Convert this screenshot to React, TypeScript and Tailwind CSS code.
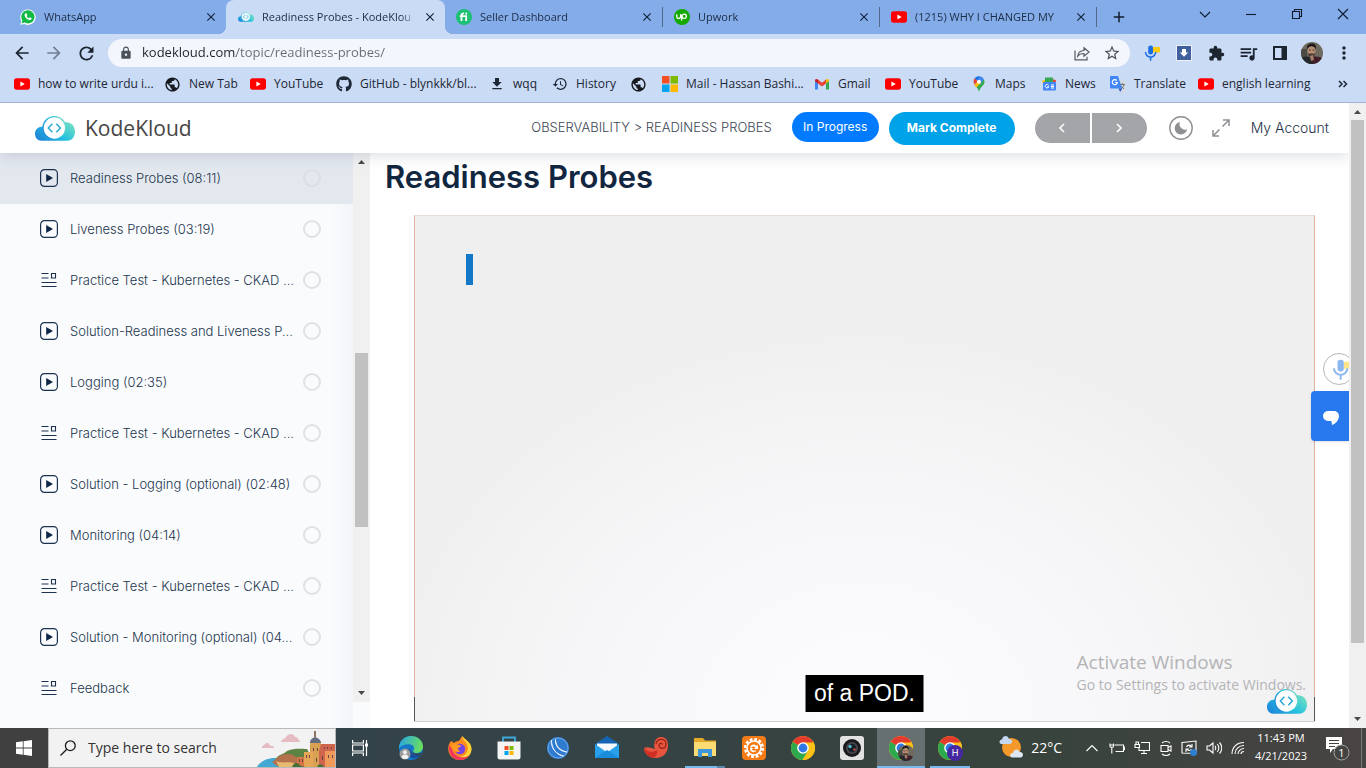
import React, { useId } from 'react';
import { FaGithub } from 'react-icons/fa';
import {
  MdArrowBack,
  MdArrowForward,
  MdClose,
  MdExtension,
  MdFileDownload,
  MdHistory,
  MdLock,
  MdMoreVert,
  MdPublic,
  MdQueueMusic,
  MdRefresh,
  MdStarBorder,
  MdAdd,
} from 'react-icons/md';

const ui = "font-['Open_Sans','Noto_Sans',sans-serif]";

/* ---------- logos ---------- */

function KodeKloudLogo({ className = '', faded = false }: { className?: string; faded?: boolean }) {
  const id = useId();
  return (
    <svg viewBox="0 0 120 75" className={className} aria-hidden="true">
      <defs>
        <linearGradient id={id} x1="0" y1="0.8" x2="1" y2="0.3">
          <stop offset="0" stopColor="#1f85d8" />
          <stop offset="0.55" stopColor="#22c0e0" />
          <stop offset="1" stopColor="#6cdcc4" />
        </linearGradient>
      </defs>
      <path
        d="M19 74C8 74 0 65 0 53s9-21 20-21c3 0 5 0 7 1L90 19c17-2 30 10 30 28 0 17-11 27-24 27Z"
        fill={`url(#${id})`}
      />
      <circle cx="58" cy="36" r="34" fill={faded ? '#e6f5fb' : '#fff'} stroke={`url(#${id})`} strokeWidth="4" />
      <path d="M52 23 40 36l12 13M64 23l12 13-12 13" fill="none" stroke="#2aa9d8" strokeWidth="4.5" />
    </svg>
  );
}

function YouTubeIcon() {
  return (
    <svg viewBox="0 0 16 16" className="size-4 shrink-0" aria-hidden="true">
      <rect x="0" y="2.3" width="16" height="11.4" rx="2.6" fill="#f00" />
      <path d="M6.4 5.5v5l4.3-2.5Z" fill="#fff" />
    </svg>
  );
}

function WhatsAppIcon() {
  return (
    <svg viewBox="0 0 16 16" className="size-4 shrink-0" aria-hidden="true">
      <path d="M.3 15.7 1.3 12A7.7 7.7 0 1 1 4.4 15Z" fill="#fff" />
      <path d="m1.6 14.4.8-2.9A6.6 6.6 0 1 1 4.7 13.6Z" fill="#12b944" />
      <path
        d="M5.8 4.3c-.3 0-1.2.5-1.2 1.7 0 1.9 2.8 5 5.1 5 1.200 0 1.900-.8 1.900-1.600 0-.3-1.500-1.100-1.800-1.100-.3 0-.6.900-.9.900-.5 0-2.200-1.500-2.200-2 0-.3.600-.600.600-.900 0-.3-.600-2-.900-2Z"
        fill="#fff"
      />
    </svg>
  );
}

function FiverrIcon() {
  return (
    <svg viewBox="0 0 16 16" className="size-4 shrink-0" aria-hidden="true">
      <circle cx="8" cy="8" r="8" fill="#1dbf73" />
      <path d="M5.500 12V6.500c0-1.500.8-2.200 2.400-2.200M3.800 7.200h6.400V12" fill="none" stroke="#fff" strokeWidth="1.800" />
      <circle cx="10.200" cy="4.600" r="1.100" fill="#fff" />
    </svg>
  );
}

function UpworkIcon() {
  return (
    <svg viewBox="0 0 16 16" className="size-4 shrink-0" aria-hidden="true">
      <circle cx="8" cy="8" r="8" fill="#14a800" />
      <path
        d="M2.800 5.200v2.300a1.900 1.900 0 0 0 3.800 0V5.200c.8 2.600 1.900 4.200 3.700 4.200a2.100 2.100 0 1 0-2.100-2.500L7.500 11.500"
        fill="none"
        stroke="#fff"
        strokeWidth="1.300"
      />
    </svg>
  );
}

function MicrosoftIcon() {
  return (
    <svg viewBox="0 0 16 16" className="size-4 shrink-0" aria-hidden="true">
      <path fill="#f25022" d="M0 0h7.500v7.500H0z" />
      <path fill="#7fba00" d="M8.500 0H16v7.500H8.500z" />
      <path fill="#00a4ef" d="M0 8.500h7.500V16H0z" />
      <path fill="#ffb900" d="M8.500 8.500H16V16H8.500z" />
    </svg>
  );
}

function GmailIcon() {
  return (
    <svg viewBox="0 0 16 16" className="size-4 shrink-0" aria-hidden="true">
      <path fill="#4285f4" d="M1 13.500h3V7L1 4.500z" />
      <path fill="#34a853" d="M12 13.500h3v-9L12 7z" />
      <path fill="#ea4335" d="M4 3.500 8 6.700l4-3.200V7.400L8 10.500 4 7.400z" />
      <path fill="#c5221f" d="M1 4.500C1 2.700 2.700 2.500 4 3.500v3.900L1 5.200z" />
      <path fill="#fbbc04" d="M15 4.500c0-1.800-1.700-2-3-1v3.900l3-2.200z" />
    </svg>
  );
}

function MapsIcon() {
  return (
    <svg viewBox="0 0 16 16" className="size-4 shrink-0" aria-hidden="true">
      <path fill="#34a853" d="M13.500 5.800c0 4-4.300 4.800-5.500 10C7.300 13 5.500 11 4 9.300l8.800-6c.5.700.7 1.600.7 2.500Z" />
      <path fill="#fbbc04" d="M3.500 8.700 6.800 5l2.900 2.300-4.500 4.100C4.500 10.500 3.900 9.700 3.500 8.700Z" />
      <path fill="#ea4335" d="M3.600 2.300 6.700 5 3.500 8.700C2.300 6.500 2.200 4.200 3.600 2.300Z" />
      <path fill="#1a73e8" d="M3.600 2.300C5 .6 7.600-.1 9.700.6L6.700 5Z" />
      <path fill="#4285f4" d="M9.700.6c1.400.4 2.500 1.400 3.100 2.700L9.700 7.300 6.700 5Z" />
      <circle cx="8" cy="5.800" r="2" fill="#fff" />
    </svg>
  );
}

function NewsIcon() {
  return (
    <svg viewBox="0 0 16 16" className="size-4 shrink-0" aria-hidden="true">
      <path fill="#ea4335" d="m10 3 5 1-1 5H9z" />
      <path fill="#fbbc04" d="m1 5 5-2 3 5-6 2z" />
      <path fill="#34a853" d="M4 1.500h8V8H4z" />
      <rect x="2" y="6" width="13" height="8.500" rx="1" fill="#4285f4" />
      <path d="M7.600 9.200a1.800 1.800 0 1 0 .2 1.500H6.200M10 9h3M10 10.500h3M10 12h3" stroke="#fff" fill="none" />
    </svg>
  );
}

function TranslateIcon() {
  return (
    <svg viewBox="0 0 16 16" className="size-4 shrink-0" aria-hidden="true">
      <path fill="#d5d9e0" d="M7 5h8c.5 0 1 .4 1 1v9c0 .5-.5 1-1 1H10z" />
      <path d="M9.500 8.500H15M12.200 7v1.500M14 8.500c-.3 2-1.500 3.300-3 4.300M10.800 9.500c.6 1.300 1.800 2.500 3.200 3.300" stroke="#6b7680" fill="none" />
      <path fill="#4285f4" d="M1 0h7l4 12.500H1c-.5 0-1-.5-1-1V1c0-.5.500-1 1-1Z" />
      <path fill="#2a56c6" d="m8.500 12.500 1.700 3.500 2-3.500z" />
      <path d="M6.800 4.700A2.500 2.500 0 1 0 7.300 6.500H5" stroke="#fff" strokeWidth="1.200" fill="none" />
    </svg>
  );
}

function MicIcon({ className = '' }: { className?: string }) {
  return (
    <svg viewBox="0 0 16 16" className={className} aria-hidden="true">
      <rect x="9" y="2" width="7" height="5.500" rx="0.800" fill="#fbcb12" />
      <rect x="4.200" y="0.500" width="4.800" height="9" rx="2.200" fill="#1a6fe0" />
      <path d="M1.500 7a5.100 5.100 0 0 0 10.200 0M6.600 12v3.800" fill="none" stroke="#1a6fe0" strokeWidth="1.500" />
    </svg>
  );
}

function Avatar({ className = '' }: { className?: string }) {
  const id = useId();
  return (
    <svg viewBox="0 0 22 22" className={className} aria-hidden="true">
      <clipPath id={id}>
        <circle cx="11" cy="11" r="11" />
      </clipPath>
      <g clipPath={`url(#${id})`}>
        <path fill="#6f6a5e" d="M0 0h22v22H0z" />
        <path fill="#4c4a45" d="M0 7h6v10H0z" />
        <path fill="#401f29" d="M9 16c4-2 9-2 13 1v6H7z" />
        <path fill="#24282c" d="M0 17c3-3 7-3 10-1l2 6H0z" />
        <ellipse cx="10.500" cy="9" rx="4" ry="5.300" fill="#b58c74" />
        <path fill="#1c1817" d="M6 7.500c-.6-4.500 2-6 5-6s4.600 2 3.800 6c-.8-2.500-2-3.300-4.300-3.300S6.800 5.500 6 7.500Z" />
        <path fill="#4a3830" d="M7 11c1 1 2 .5 3.500.5s2.500.5 3.500-.5c0 2.700-1.500 4.200-3.500 4.200S7 13.700 7 11Z" />
        <path d="M8 8h1.800M11.500 8h1.800" stroke="#3a2a24" strokeWidth="0.900" />
        <path fill="#a67d68" d="m9 14 3-1 1 5-3 1z" />
      </g>
    </svg>
  );
}

/* ---------- browser chrome ---------- */

type Tab = { title: string; icon: React.ReactNode; width: string; active?: boolean; line?: boolean };

const tabs: Tab[] = [
  { title: 'WhatsApp', icon: <WhatsAppIcon />, width: 'w-[226px] pl-5' },
  {
    title: 'Readiness Probes - KodeKlou',
    icon: <KodeKloudLogo faded className="w-4 shrink-0" />,
    width: 'w-[219px] pl-3',
    active: true,
  },
  { title: 'Seller Dashboard', icon: <FiverrIcon />, width: 'w-[218px] pl-[11px]', line: true },
  { title: 'Upwork', icon: <UpworkIcon />, width: 'w-[217px] pl-[11px]', line: true },
  { title: '(1215) WHY I CHANGED MY', icon: <YouTubeIcon />, width: 'w-[217px] pl-[11px]', line: true },
];

function TabStrip() {
  return (
    <div className="flex h-[34px] shrink-0 bg-[#84ace9]">
      <div role="tablist" className="flex min-w-0">
        {tabs.map((t) => (
          <div
            key={t.title}
            role="tab"
            aria-selected={!!t.active}
            className={`relative flex items-center ${t.width} ${t.active ? 'rounded-t-lg bg-[#cadbf5]' : ''}`}
          >
            {t.active && (
              <>
                <i className="absolute bottom-0 -left-2 size-2 bg-[radial-gradient(circle_at_0_0,transparent_8px,#cadbf5_8px)]" />
                <i className="absolute -right-2 bottom-0 size-2 bg-[radial-gradient(circle_at_100%_0,transparent_8px,#cadbf5_8px)]" />
              </>
            )}
            {t.icon}
            <span className="ml-2 w-[154px] overflow-hidden mask-r-from-90% text-[11px] whitespace-nowrap text-[#1c2c44]">{t.title}</span>
            <button aria-label={`Close ${t.title}`} className="mr-2 ml-auto grid size-[14px] place-items-center text-[#13233b]">
              <MdClose size={14} />
            </button>
            {t.line && <i className="h-5 w-px bg-[#52688c]" />}
          </div>
        ))}
      </div>
      <button aria-label="New tab" className="ml-[10px] grid w-6 place-items-center text-[#111d30]">
        <MdAdd size={18} />
      </button>
      <div className="ml-auto flex h-7 items-center text-[#101a2c]">
        {[
          ['Search tabs', 'M1 4l5 5 5-5'],
          ['Minimize', 'M1 6.500h10'],
          ['Restore', 'M1.500 3.500h7v7h-7zM3.500 3V1.500h7v7H9'],
          ['Close window', 'M1 1l10 10M11 1 1 11'],
        ].map(([label, d]) => (
          <button key={label} aria-label={label} className="grid w-[46px] place-items-center">
            <svg viewBox="0 0 12 12" className="size-3" fill="none" stroke="currentColor" strokeWidth="1.100">
              <path d={d} />
            </svg>
          </button>
        ))}
      </div>
    </div>
  );
}

function Toolbar() {
  const btn = 'grid h-7 w-8 shrink-0 place-items-center text-[#1c2430]';
  return (
    <div className="flex h-[38px] shrink-0 items-center bg-[#cadbf5] px-[6px]">
      <button aria-label="Back" className={btn}>
        <MdArrowBack size={20} />
      </button>
      <button aria-label="Forward" className={`${btn} opacity-50`}>
        <MdArrowForward size={20} />
      </button>
      <button aria-label="Reload" className={btn}>
        <MdRefresh size={21} />
      </button>
      <div className="mx-[6px] flex h-7 flex-1 items-center rounded-full bg-[#f3f7fd] pr-1 pl-[11px]">
        <MdLock size={14} className="text-[#4b5159]" />
        <input
          aria-label="Address"
          defaultValue="kodekloud.com/topic/readiness-probes/"
          className="ml-[9px] min-w-0 flex-1 bg-linear-to-r from-[#1f2227] from-[94px] to-[#666b73] to-[94px] bg-clip-text text-[13px] text-transparent outline-none"
        />
        <button aria-label="Share" className={btn}>
          <svg viewBox="0 0 16 16" className="size-4" fill="none" stroke="#555a61" strokeWidth="1.200">
            <path d="M1 5.500v9.300h12v-3M3.700 11.200c.4-3.800 2.600-5.500 6.300-5.700V2.800L15 7l-5 4.200V8.500c-2.800 0-4.800.7-6.300 2.700Z" />
          </svg>
        </button>
        <button aria-label="Bookmark" className="grid size-7 place-items-center text-[#4b5159]">
          <MdStarBorder size={18} />
        </button>
      </div>
      <button aria-label="Voice typing" className={btn}>
        <MicIcon className="size-4" />
      </button>
      <button aria-label="Downloader" className={btn}>
        <svg viewBox="0 0 16 16" className="size-4">
          <rect x="0.500" y="0.500" width="15" height="15" fill="#3f5f9d" stroke="#eef3fb" />
          <path d="M6 4h4v3.500h2.200L8 11.800 3.800 7.500H6z" fill="#fff" />
        </svg>
      </button>
      <button aria-label="Extensions" className={btn}>
        <MdExtension size={17} />
      </button>
      <button aria-label="Media" className={btn}>
        <MdQueueMusic size={21} />
      </button>
      <button aria-label="Side panel" className={btn}>
        <svg viewBox="0 0 14 14" className="size-[14px]">
          <path fill="currentColor" fillRule="evenodd" d="M0 0h14v14H0zM2 2v10h6.500V2z" />
        </svg>
      </button>
      <button aria-label="Profile" className={btn}>
        <Avatar className="size-[22px]" />
      </button>
      <button aria-label="Menu" className={btn}>
        <MdMoreVert size={20} />
      </button>
    </div>
  );
}

const globe = <MdPublic size={17} className="shrink-0 text-[#16191e]" />;

const bookmarks: { label: string; icon: React.ReactNode; width: string }[] = [
  { label: 'how to write urdu i...', icon: <YouTubeIcon />, width: 'w-[150px]' },
  { label: 'New Tab', icon: globe, width: 'w-[86px]' },
  { label: 'YouTube', icon: <YouTubeIcon />, width: 'w-[86px]' },
  { label: 'GitHub - blynkkk/bl...', icon: <FaGithub size={16} className="shrink-0" />, width: 'w-[153px]' },
  { label: 'wqq', icon: <MdFileDownload size={16} className="shrink-0" />, width: 'w-[63px]' },
  { label: 'History', icon: <MdHistory size={16} className="shrink-0" />, width: 'w-[78px]' },
  { label: '', icon: globe, width: 'w-[32px]' },
  { label: 'Mail - Hassan Bashi...', icon: <MicrosoftIcon />, width: 'w-[152px]' },
  { label: 'Gmail', icon: <GmailIcon />, width: 'w-[71px]' },
  { label: 'YouTube', icon: <YouTubeIcon />, width: 'w-[86px]' },
  { label: 'Maps', icon: <MapsIcon />, width: 'w-[70px]' },
  { label: 'News', icon: <NewsIcon />, width: 'w-[69px]' },
  { label: 'Translate', icon: <TranslateIcon />, width: 'w-[88px]' },
  { label: 'english learning', icon: <YouTubeIcon />, width: 'w-[120px]' },
];

function BookmarksBar() {
  return (
    <div className="flex h-[31px] shrink-0 items-center border-b border-[#a3b3d4] bg-[#cadbf5] pb-[6px] pl-[14px] text-xs text-[#1d2736]">
      {bookmarks.map((b, i) => (
        <a key={i} href="#" aria-label={b.label || 'Untitled'} className={`flex shrink-0 items-center gap-2 whitespace-nowrap ${b.width}`}>
          {b.icon}
          {b.label}
        </a>
      ))}
      <button aria-label="More bookmarks" className="mr-[18px] ml-auto">
        <svg viewBox="0 0 10 8" className="h-2 w-[10px]" fill="none" stroke="currentColor" strokeWidth="1.500">
          <path d="m1 1 3 3-3 3M5.500 1l3 3-3 3" />
        </svg>
      </button>
    </div>
  );
}

/* ---------- page ---------- */

function Arrow({ down = false }: { down?: boolean }) {
  return (
    <svg viewBox="0 0 17 17" className="size-[17px] shrink-0" aria-hidden="true">
      <path d={down ? 'M5 6h7l-3.500 4z' : 'M5 11h7L8.500 7z'} fill="#4a4a4a" />
    </svg>
  );
}

function PageHeader() {
  return (
    <header className="z-10 flex h-[50px] shrink-0 items-center bg-white pr-5 pl-[35px] shadow-[0_2px_14px_rgba(60,70,110,0.2)]">
      <a href="#" className="flex items-center gap-[10px]">
        <KodeKloudLogo className="w-10" />
        <span className="font-['Open_Sans',sans-serif] text-[21px] leading-[26px] text-[#454545]">KodeKloud</span>
      </a>
      <div className="ml-auto flex items-center">
        <span className="text-[13px] font-light whitespace-nowrap text-[#3c4654]">OBSERVABILITY &gt; READINESS PROBES</span>
        <button className="mb-[2px] ml-5 h-[30px] w-[87px] rounded-full bg-[#007bff] text-xs text-white">In Progress</button>
        <button className="ml-[10px] h-[33px] w-[126px] rounded-full bg-[#00a2e8] text-xs font-bold text-white">Mark Complete</button>
        <div className="ml-5 flex gap-[2px]">
          <button aria-label="Previous lesson" className="grid h-[30px] w-[55px] place-items-center rounded-l-full bg-[#a3a5a8]">
            <svg viewBox="0 0 8 10" className="h-[10px] w-2" fill="none" stroke="#fff" strokeWidth="1.600">
              <path d="M6 1 2 5l4 4" />
            </svg>
          </button>
          <button aria-label="Next lesson" className="grid h-[30px] w-[55px] place-items-center rounded-r-full bg-[#a3a5a8]">
            <svg viewBox="0 0 8 10" className="h-[10px] w-2" fill="none" stroke="#fff" strokeWidth="1.600">
              <path d="m2 1 4 4-4 4" />
            </svg>
          </button>
        </div>
        <button aria-label="Dark mode" className="ml-[22px]">
          <svg viewBox="0 0 24 24" className="size-6">
            <circle cx="12" cy="12" r="11.200" fill="none" stroke="#8d8f92" strokeWidth="1.400" />
            <path d="M11 6a5.500 5.500 0 0 0 7.200 7.200A6.300 6.300 0 1 1 11 6Z" fill="#8d8f92" />
          </svg>
        </button>
        <button aria-label="Full screen" className="ml-[19px]">
          <svg viewBox="0 0 18 18" className="size-[18px]" fill="none" stroke="#8d8f92" strokeWidth="1.500">
            <path d="M11 1h6v6M17 1l-6.500 6.500M7 17H1v-6M1 17l6.500-6.500" />
          </svg>
        </button>
        <a href="#" className="ml-[21px] text-sm font-light whitespace-nowrap text-[#1e3247]">
          My Account
        </a>
      </div>
    </header>
  );
}

const lessons: { title: string; kind: 'video' | 'text' }[] = [
  { title: 'Readiness Probes (08:11)', kind: 'video' },
  { title: 'Liveness Probes (03:19)', kind: 'video' },
  { title: 'Practice Test - Kubernetes - CKAD ...', kind: 'text' },
  { title: 'Solution-Readiness and Liveness P...', kind: 'video' },
  { title: 'Logging (02:35)', kind: 'video' },
  { title: 'Practice Test - Kubernetes - CKAD ...', kind: 'text' },
  { title: 'Solution - Logging (optional) (02:48)', kind: 'video' },
  { title: 'Monitoring (04:14)', kind: 'video' },
  { title: 'Practice Test - Kubernetes - CKAD ...', kind: 'text' },
  { title: 'Solution - Monitoring (optional) (04...', kind: 'video' },
  { title: 'Feedback', kind: 'text' },
];

function LessonIcon({ kind }: { kind: 'video' | 'text' }) {
  return (
    <svg viewBox="0 0 18 18" className="mb-px size-[18px] shrink-0" fill="none" stroke="#1c3350" aria-hidden="true">
      {kind === 'video' ? (
        <>
          <rect x="0.600" y="0.600" width="16.800" height="16.800" rx="3.800" strokeWidth="1.200" />
          <path d="M6.200 5v8l6.800-4z" fill="#0f2747" stroke="none" />
        </>
      ) : (
        <path d="M1.500 2.500h7M1.500 7h7M11.500 2.500h4v4.500h-4zM1.500 11.500h15M1.500 15.500h15" strokeWidth="1.100" />
      )}
    </svg>
  );
}

function Sidebar() {
  return (
    <aside className="flex w-[370px] shrink-0 bg-[#fafbfd]">
      <nav className="min-w-0 flex-1 bg-linear-to-l from-[#f3f5fa] to-[#fafbfd] to-[24px]">
        {lessons.map((l, i) => (
          <a
            key={i}
            href="#"
            aria-current={i === 0 ? 'page' : undefined}
            className={`flex h-[51px] items-center pr-8 pl-10 text-[13px] font-light text-[#22364e] ${i === 0 ? 'bg-[#e3e8ef]' : ''}`}
          >
            <LessonIcon kind={l.kind} />
            <span className="ml-3 min-w-0 flex-1 whitespace-nowrap">{l.title}</span>
            <i className={`mb-px size-[18px] shrink-0 rounded-full border-2 ${i === 0 ? 'border-[#dbdee3]' : 'border-[#e0e1e4]'}`} />
          </a>
        ))}
      </nav>
      <div className="mb-[26px] flex w-[17px] flex-col items-center bg-[#f0f0f0]">
        <Arrow />
        <i className="mt-[183px] h-[174px] w-[13px] bg-[#c1c1c1]" />
        <span className="mt-auto flex">
          <Arrow down />
        </span>
      </div>
    </aside>
  );
}

function Video() {
  return (
    <div className="relative mt-[19px] mr-[34px] ml-11 aspect-video border-x border-t border-b border-x-[#e2b39b] border-t-[#e6dcd8] border-b-[#cfcfd2] bg-[#f0eff0] bg-[radial-gradient(ellipse_55%_80%_at_50%_100%,#fcfcfe_0%,#f8f8fa_45%,#f0eff0_100%)]">
      <i className="absolute top-[38px] left-[51px] h-[31px] w-[7px] bg-[#1478c8]" />
      <i className="absolute bottom-0 -left-px h-6 w-px bg-[#55565c]" />
      <i className="absolute -right-px bottom-0 h-6 w-px bg-[#55565c]" />
      <p className="absolute bottom-[9px] left-1/2 -translate-x-1/2 bg-black px-[9px] font-['Liberation_Sans',Arial,sans-serif] text-[23px] leading-[37px] whitespace-nowrap text-white">
        of a POD.
      </p>
      <KodeKloudLogo className="absolute right-[7px] bottom-[7px] w-10" />
      <div className="absolute right-2 bottom-[27px] font-['Open_Sans','Noto_Sans',sans-serif] whitespace-nowrap text-[#b4b4b6]">
        <p className="text-[19px] leading-7">Activate Windows</p>
        <p className="text-sm leading-[18px]">Go to Settings to activate Windows.</p>
      </div>
    </div>
  );
}

function Page() {
  return (
    <div className="flex min-h-0 flex-1 bg-white">
      <div className="relative flex min-w-0 flex-1 flex-col overflow-hidden font-['Inter',sans-serif]">
        <PageHeader />
        <div className="flex min-h-0 flex-1 overflow-hidden">
          <Sidebar />
          <main className="min-w-0 flex-1 overflow-hidden">
            <h1 className="mt-1 ml-[15px] text-[31px] leading-[39px] font-semibold text-[#12263f]">Readiness Probes</h1>
            <Video />
          </main>
        </div>
        <button
          aria-label="Voice typing"
          className="absolute top-[250px] -right-[6px] z-20 flex size-8 items-center rounded-full border border-[#b8b8bc] bg-white pl-2"
        >
          <MicIcon className="size-[21px] shrink-0 opacity-50" />
        </button>
        <button aria-label="Open chat" className="absolute top-72 right-0 z-20 grid h-[50px] w-[38px] place-items-center rounded-l bg-[#2878ee] shadow">
          <svg viewBox="0 0 16 14" className="mt-1 ml-[2px] h-[14px] w-4">
            <path d="M5 0h6a5 5 0 0 1 5 5c0 4-3.500 8-7 9l-.6-4H5A5 5 0 0 1 5 0Z" fill="#fff" />
          </svg>
        </button>
      </div>
      <div className="flex w-[17px] shrink-0 flex-col items-center bg-[#f0f0f0]">
        <Arrow />
        <i className="h-[523px] w-[13px] bg-[#c1c1c1]" />
        <span className="mt-auto flex">
          <Arrow down />
        </span>
      </div>
    </div>
  );
}

/* ---------- taskbar ---------- */

function EdgeIcon() {
  const id = useId();
  return (
    <svg viewBox="0 0 24 24" className="size-6" aria-hidden="true">
      <linearGradient id={id} x1="0" y1="0.300" x2="1" y2="0.500">
        <stop offset="0" stopColor="#2aa6e0" />
        <stop offset="1" stopColor="#6be05c" />
      </linearGradient>
      <circle cx="12" cy="12" r="12" fill="#1476c6" />
      <path d="M0 11C1 4 6 0 12 0c7 0 12 5 12 10.500 0 4-3 6.500-6.500 6.500-2.500 0-4-1-3-2.700 1.700-3-.5-6-4.500-6C5 8.300 1 10 0 13Z" fill={`url(#${id})`} />
      <path d="M8 13c-2 5 3 10 9 9 2-.6 4-2 5-4-5 2-10 .5-11-5Z" fill="#174f9c" />
      <path d="M11.500 13c0 2.500 2.500 4.500 6 4.500 2 0 3.500-.3 5-1l-1 2.500c-5 1-10-1.500-10-6Z" fill="#364244" />
      <circle cx="6" cy="18" r="5.500" fill="#9c9c9c" />
      <circle cx="6" cy="16.300" r="2" fill="#f0f0f0" />
      <path d="M2.500 21.500c0-4 7-4 7 0-2 2-5 2-7 0Z" fill="#f0f0f0" />
    </svg>
  );
}

function FirefoxIcon() {
  return (
    <svg viewBox="0 0 24 24" className="size-6" aria-hidden="true">
      <path d="M3 5c1 .3 2 1 2.500 2C8 5.500 9 5 11 5c1-2 2-3 3.500-5 1 3 6 4 8 9 3 7-2 15-10.500 15S-1 17 .500 10C1 8 2 6.500 3 5Z" fill="#ff8a1e" />
      <path d="M14.500 0c-1 4 4 5 5 10 1.500 7-4 11-9 11 7 3 13-2 13-8 0-7-7-9-9-13Z" fill="#ffd43a" />
      <path d="M1 9c-1 8 3 14 10 15 4 .3 8-1 10-4-7 3-15 1-17-7Z" fill="#f2385c" />
      <circle cx="12" cy="13" r="5.200" fill="#7543e3" />
      <path d="M4 8c3-1 5 1 8 1 1.500 0 1 2-1 2.500-2 .5-1 3 1.500 3.500-4 3-9-1-8.500-7Z" fill="#ff9a22" />
    </svg>
  );
}

function ChromeIcon({ badge }: { badge?: 'photo' | 'letter' }) {
  return (
    <svg viewBox="0 0 26 26" className="size-[26px]" aria-hidden="true">
      <circle cx="13" cy="13" r="12" fill="#fbc116" />
      <path d="M13 13 2.600 7A12 12 0 0 1 23.400 7Z" fill="#e33b2e" />
      <path d="M2.600 7A12 12 0 0 0 12.500 25L18 16l-5-3Z" fill="#2da94f" />
      <path d="M13 7.500h10.700A12 12 0 0 1 12.500 25l5.500-9Z" fill="#fbc116" />
      <circle cx="13" cy="13" r="5.800" fill="#fff" />
      <circle cx="13" cy="13" r="4.400" fill="#2f78e6" />
      {badge === 'letter' && (
        <>
          <circle cx="18" cy="18" r="8" fill="#4527a0" />
          <text x="18" y="21.200" textAnchor="middle" fontSize="9" fill="#fff" fontFamily="Inter, sans-serif">
            H
          </text>
        </>
      )}
      {badge === 'photo' && (
        <svg x="10" y="10" width="16" height="16">
          <Avatar />
        </svg>
      )}
    </svg>
  );
}

const apps: { name: string; icon: React.ReactNode; state?: 'open' | 'active' | 'multi' }[] = [
  { name: 'Microsoft Edge', icon: <EdgeIcon /> },
  { name: 'Firefox', icon: <FirefoxIcon /> },
  {
    name: 'Microsoft Store',
    icon: (
      <svg viewBox="0 0 24 24" className="size-6">
        <path d="M6 6V1.500h12V6" fill="none" stroke="#3fa9dc" strokeWidth="1.800" />
        <path d="M.500 5.500h23V21a2.500 2.500 0 0 1-2.500 2.500H3A2.500 2.500 0 0 1 .500 21Z" fill="#f4f4f4" />
        <path fill="#f25022" d="M7.500 10h4v4h-4z" />
        <path fill="#7fba00" d="M12.500 10h4v4h-4z" />
        <path fill="#00a4ef" d="M7.500 15h4v4h-4z" />
        <path fill="#ffb900" d="M12.500 15h4v4h-4z" />
      </svg>
    ),
  },
  {
    name: 'Browser',
    icon: (
      <svg viewBox="0 0 22 22" className="size-[22px]">
        <circle cx="11" cy="11" r="11" fill="#2f7bd0" />
        <circle cx="11" cy="11" r="10" fill="none" stroke="#6aa9e8" strokeWidth="1" />
        <path d="M4.500 3c-.5 8 4 14 12 16C10 18 4 12 4.500 3ZM8.500 2.500c0 6 4 11 11.500 12.500C13 14.500 8 9.500 8.500 2.500Z" fill="#fff" stroke="#e4f0ff" strokeWidth="1" />
      </svg>
    ),
  },
  {
    name: 'Mail',
    icon: (
      <svg viewBox="0 0 24 24" className="size-6">
        <path d="M0 8 12 0l12 8v4H0Z" fill="#1564b4" />
        <path d="M2 7.500h20v8H2z" fill="#f5f9fd" />
        <path d="M0 8v14h24V8l-12 8.500Z" fill="#28a0ea" />
        <path d="m0 22 12-8 12 8Z" fill="#1b8bdb" />
      </svg>
    ),
  },
  {
    name: 'Nautilus',
    icon: (
      <svg viewBox="0 0 24 22" className="size-6">
        <path d="M0 11c3-2 8 0 11 1-1-2-1-4-.500-6C11 2 14 0 17.500 0 22 0 24 4 24 8c0 8-5 13-12 13C5 21 0 17 0 11Z" fill="#e8553f" />
        <path d="M0 11c3 4 8 5 13 2 1 3-1 7-4 8C4 20 0 16 0 11Z" fill="#cf2f24" />
        <path d="M18.500 7.500c-.5-2-3.500-1.500-3.500 1 0 4 7 4 7-1.500 0-6-9-6.500-10 0" fill="none" stroke="#8f2418" strokeWidth="1.200" />
      </svg>
    ),
  },
  {
    name: 'File Explorer',
    state: 'multi',
    icon: (
      <svg viewBox="0 0 22 20" className="h-5 w-[22px]">
        <path d="M0 0h9l2 2.500h11V18H0Z" fill="#e5a92c" />
        <path d="M0 4h22v14H0Z" fill="#fbdc73" />
        <path d="M4 19v-8h14v8h-4v-4H8v4Z" fill="#3d97dd" />
      </svg>
    ),
  },
  {
    name: 'Media player',
    icon: (
      <svg viewBox="0 0 24 24" className="size-6">
        <rect width="24" height="24" rx="4" fill="#f47b16" />
        <circle cx="12" cy="12" r="8.800" fill="none" stroke="#fff" strokeWidth="2.600" strokeDasharray="2.800 1.800" />
        <circle cx="12" cy="12" r="7" fill="none" stroke="#fff" strokeWidth="1.600" />
        <path d="M8 11c1-3 5-3.500 7-1l1-1.500v4.500h-4l1.500-1.500c-1.500-1.500-3.500-1-4 .500ZM8 12h3l-1 1.500c1 1.500 3 1.500 4.500.500-1 2.500-4 3-6 .800Z" fill="#fff" />
      </svg>
    ),
  },
  { name: 'Chrome', icon: <ChromeIcon /> },
  {
    name: 'Camera',
    icon: (
      <svg viewBox="0 0 24 24" className="size-6">
        <rect width="24" height="24" rx="3" fill="#e2e2e2" />
        <circle cx="12" cy="12" r="9" fill="#1a1a1c" />
        <circle cx="12" cy="12" r="6" fill="#45474c" />
        <circle cx="12" cy="12" r="4.200" fill="#16202a" />
        <circle cx="10" cy="10.500" r="1.700" fill="#55bccb" />
        <circle cx="14.500" cy="13.500" r="1.200" fill="#c24b3c" />
      </svg>
    ),
  },
  { name: 'Chrome, profile 1', icon: <ChromeIcon badge="photo" />, state: 'active' },
  { name: 'Chrome, profile H', icon: <ChromeIcon badge="letter" />, state: 'open' },
];

function SearchArt() {
  return (
    <svg viewBox="0 0 80 38" className="h-[38px] w-20 shrink-0" aria-hidden="true">
      <path d="M7 19c0-3 3-3 4-5 3-1 4 2 4 3 3-1 4 1 4 2ZM26 13c0-3 4-3 5-5 3-5 8-3 9 0 3-1 4 5 6 5Z" fill="#e5bcc2" />
      <path d="M2 38c4-7 14-11 25-8l8 8Z" fill="#43a9d3" />
      <path d="M20 31c3-6 8-5 12-9 8-3 12-2 20-2l10 18H24Z" fill="#5d8344" />
      <path d="M17 33c4-2 5-5 10-7 4-2 11-1 14 2l4 9H22Z" fill="#b5714c" />
      <path d="M21 32c7 3 12 0 18 2l3 4H24Z" fill="#e8bb72" />
      <path d="M42 28h10v10H42z" fill="#d67548" />
      <path d="M55 16c0-4 2-6 5-8 4 2 6 4 6 8v22H55z" fill="#d8a052" />
      <path d="M55 14c0-4 3-5 5-6 3 1 6 3 6 6Z" fill="#646c80" />
      <path d="M60 2v6" stroke="#6c4b35" strokeWidth="1.500" />
      <path d="M66 15h14v23H64V22z" fill="#cf654c" />
      <path d="M70 22h10v16H70z" fill="#ee9a5a" />
      <path d="M49 23h9v15h-9z" fill="#e5a658" />
      <path d="M51 26h1v3h-1zM54 26h1v3h-1zM58 19h1v3h-1zM62 19h1v3h-1zM69 18h1v2h-1zM72 18h1v2h-1zM76 18h1v2h-1zM73 26h1v3h-1zM77 26h1v3h-1zM61 29h1v4h-1zM67 27h1v4h-1zM44 30h1v3h-1zM47 30h1v3h-1z" fill="#68463f" />
      <path d="M37 38c2-5 6-5 9-1l5 1ZM62 38c2-4 5-3 7 0Z" fill="#476f38" />
    </svg>
  );
}

const tray: { label: string; d: string; width: string }[] = [
  { label: 'Show hidden icons', d: 'M2.500 11 8 5.500l5.500 5.500', width: 'w-6' },
  { label: 'Battery', d: 'M5.500 5h9v6.500h-8M14.500 7h1.200v2.500h-1.200M1 3.500v3c0 1.200 3.500 1.200 3.500 0v-3M.500 5h4.500M2.800 7.500v6', width: 'w-[26px]' },
  { label: 'Network lock', d: 'M7 2.500h8.500v8H5V8M7 13.500h6M10 10.500v3M1 4.500h4.500v3H1zM2 4.500V2h2.500v2.500', width: 'w-6' },
  { label: 'Meet now', d: 'M3 5.500h7v6H3zM10 7.500l3-1.500v5l-3-1.500M4 3c2-2 6-2 8 0M4 14c2 2 6 2 8 0', width: 'w-[23px]' },
  { label: 'Update', d: 'M1 2.500 15 1v12.500L1 13zM5.500 7c1-2.500 4-2.500 5 0M11 4v3H8M10.500 9c-1 2-4 2-5 0M5 12V9h3', width: 'w-6' },
  { label: 'Volume', d: 'M1 6h2.500L7 3v10L3.500 10H1zM9 6c1 1 1 3 0 4M11.300 4.200c2 2 2 5.600 0 7.600M13.500 2.500c3 3 3 8 0 11', width: 'w-[25px]' },
  { label: 'Wi-Fi', d: 'M2 14C2 7 7 2.500 14 2.500M5 14c0-5 4-8.500 9-8.500M8 14c0-3 3-5.500 6-5.500M11 14c0-1.500 1.500-2.500 3-2.500', width: 'w-6' },
];

function Taskbar() {
  return (
    <footer
      className={`flex h-10 shrink-0 items-stretch bg-linear-to-r from-[#33434a] from-25% via-[#37433c] via-75% to-[#484443] text-white ${ui}`}
    >
      <button aria-label="Start" className="grid w-12 place-items-center bg-[#404040]">
        <svg viewBox="0 0 16 16" className="size-4" fill="#fff">
          <path d="M0 2.300 6.800 1.300v6.300H0zM7.600 1.200 16 0v7.600H7.600zM0 8.400h6.800v6.300L0 13.700zM7.600 8.400H16V16l-8.400-1.200z" />
        </svg>
      </button>
      <label className="flex w-72 items-center border border-[#b9b9b9] bg-[#f2f2f2]">
        <svg viewBox="0 0 16 16" className="ml-[11px] size-4 shrink-0" fill="none" stroke="#1b1b1b" strokeWidth="1.300">
          <circle cx="10.300" cy="5.700" r="4.900" />
          <path d="M6.800 9.200.500 15.500" />
        </svg>
        <input
          aria-label="Search"
          placeholder="Type here to search"
          className="ml-3 min-w-0 flex-1 bg-transparent text-sm text-[#333] outline-none placeholder:text-[#333]"
        />
        <SearchArt />
      </label>
      <button aria-label="Task view" className="mr-[3px] grid w-12 place-items-center">
        <svg viewBox="0 0 16 16" className="size-4" fill="none" stroke="#fff" strokeWidth="1.200">
          <path d="M.600 0v3h10.800V0M.600 16v-3h10.800v3M.600 5h10.800v6H.600zM14.500 0v16" />
          <path d="M13 3.500h3v3h-3z" fill="#fff" stroke="none" />
        </svg>
      </button>
      <div className="flex gap-px">
        {apps.map((a) => (
          <button key={a.name} aria-label={a.name} className={`relative grid w-12 place-items-center ${a.state === 'active' ? 'bg-[#667070]' : ''}`}>
            {a.icon}
            {a.state && <i className={`absolute bottom-0 h-[2px] bg-[#76b9ed] ${a.state === 'active' ? 'inset-x-0' : 'inset-x-1'}`} />}
            {a.state === 'multi' && <i className="absolute right-1 bottom-0 h-[2px] w-2 bg-[#5a86a8]" />}
          </button>
        ))}
      </div>
      <div className="ml-auto flex items-center">
        <button className="flex items-center gap-2 text-sm">
          <svg viewBox="0 0 24 24" className="size-6" aria-hidden="true">
            <circle cx="12.500" cy="11.500" r="9.500" fill="#f5992a" />
            <path d="M2 8c-3-1-1-5 1-4.500C4-1 9-1 10 3c4-.5 4 4 1 5Z" fill="#c5d8ef" />
            <path d="M13 21.500c-3-1-2-5 1-4.500 1-5 6-4 6.500-1 4-.5 4.500 4.500 1.500 5.500Z" fill="#dde8f5" />
          </svg>
          22°C
        </button>
        <div className="ml-[18px] flex">
          {tray.map((t) => (
            <button key={t.label} aria-label={t.label} className={`relative grid h-10 place-items-center ${t.width}`}>
              <svg viewBox="0 0 16 16" className="size-4" fill="none" stroke="#fff" strokeWidth="1.100">
                <path d={t.d} />
                {t.label === 'Update' && <circle cx="12.500" cy="12.500" r="3.500" fill="#2f7fd0" stroke="none" />}
              </svg>
            </button>
          ))}
        </div>
        <button className="mb-[2px] w-[62px] text-center text-[11px] leading-[18px] whitespace-nowrap">
          11:43 PM
          <br />
          4/21/2023
        </button>
        <button aria-label="Notifications" className="ml-[5px] grid w-10 place-items-center">
          <svg viewBox="0 0 26 26" className="size-[26px]" aria-hidden="true">
            <path d="M2 2h16v12H9l-3 4v-4H2Z" fill="#fff" />
            <path d="M5 5.500h10M5 8.500h10M5 11.500h6" stroke="#42443c" />
            <circle cx="17.500" cy="17.500" r="7.500" fill="#43433f" stroke="#a6a6a6" />
            <text x="17.500" y="21.500" textAnchor="middle" fontSize="11" fill="#fff">
              1
            </text>
          </svg>
        </button>
        <i className="mx-1 h-10 w-px bg-[#77777a]" />
      </div>
    </footer>
  );
}

export default function App() {
  return (
    <div className={`flex h-screen flex-col overflow-hidden ${ui}`}>
      <TabStrip />
      <Toolbar />
      <BookmarksBar />
      <Page />
      <Taskbar />
    </div>
  );
}
